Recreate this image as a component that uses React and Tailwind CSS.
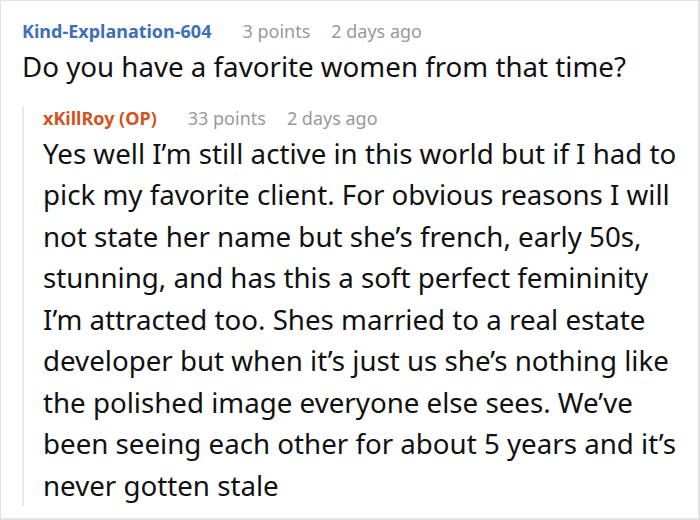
import React from 'react';

const comment = {
  author: 'Kind-Explanation-604',
  points: '3 points',
  time: '2 days ago',
  body: 'Do you have a favorite women from that time?',
};

const reply = {
  author: 'xKillRoy (OP)',
  points: '33 points',
  time: '2 days ago',
  body:
    'Yes well I’m still active in this world but if I had to pick my favorite client. For obvious reasons I will not state her name but she’s french, early 50s, stunning, and has this a soft perfect femininity I’m attracted too. Shes married to a real estate developer but when it’s just us she’s nothing like the polished image everyone else sees. We’ve been seeing each other for about 5 years and it’s never gotten stale',
};

const Meta = ({ author, points, time, authorClass, className = '' }) => (
  <div className={`flex items-baseline text-[18px] leading-[24px] ${className}`}>
    <span className={`font-bold ${authorClass}`}>{author}</span>
    <span className="ml-[31px] text-[#999999]">{points}</span>
    <span className="ml-[21px] text-[#999999]">{time}</span>
  </div>
);

const App = () => {
  return (
    <div className="w-[700px] h-[520px] bg-white border-t border-l border-r-2 border-b-2 border-[#e3e3e3] font-['Noto_Sans',sans-serif] text-[#111111] overflow-hidden">
      <div className="pl-[21px] pr-[8px] pt-[18px]">
        <Meta {...comment} authorClass="text-[#3f6fb9]" />
        <p className="text-[27.7px] leading-[41.5px] mt-[3px]">{comment.body}</p>

        {/* reply thread */}
        <div className="mt-[27px] border-l-2 border-[#e8e8e8] pl-[19px]">
          <Meta {...reply} authorClass="text-[#d2531f]" className="-mt-[9px]" />
          <p className="text-[27.7px] leading-[41.5px] mt-[3px] -mb-[5px]">{reply.body}</p>
        </div>
      </div>
    </div>
  );
};

export default App;
